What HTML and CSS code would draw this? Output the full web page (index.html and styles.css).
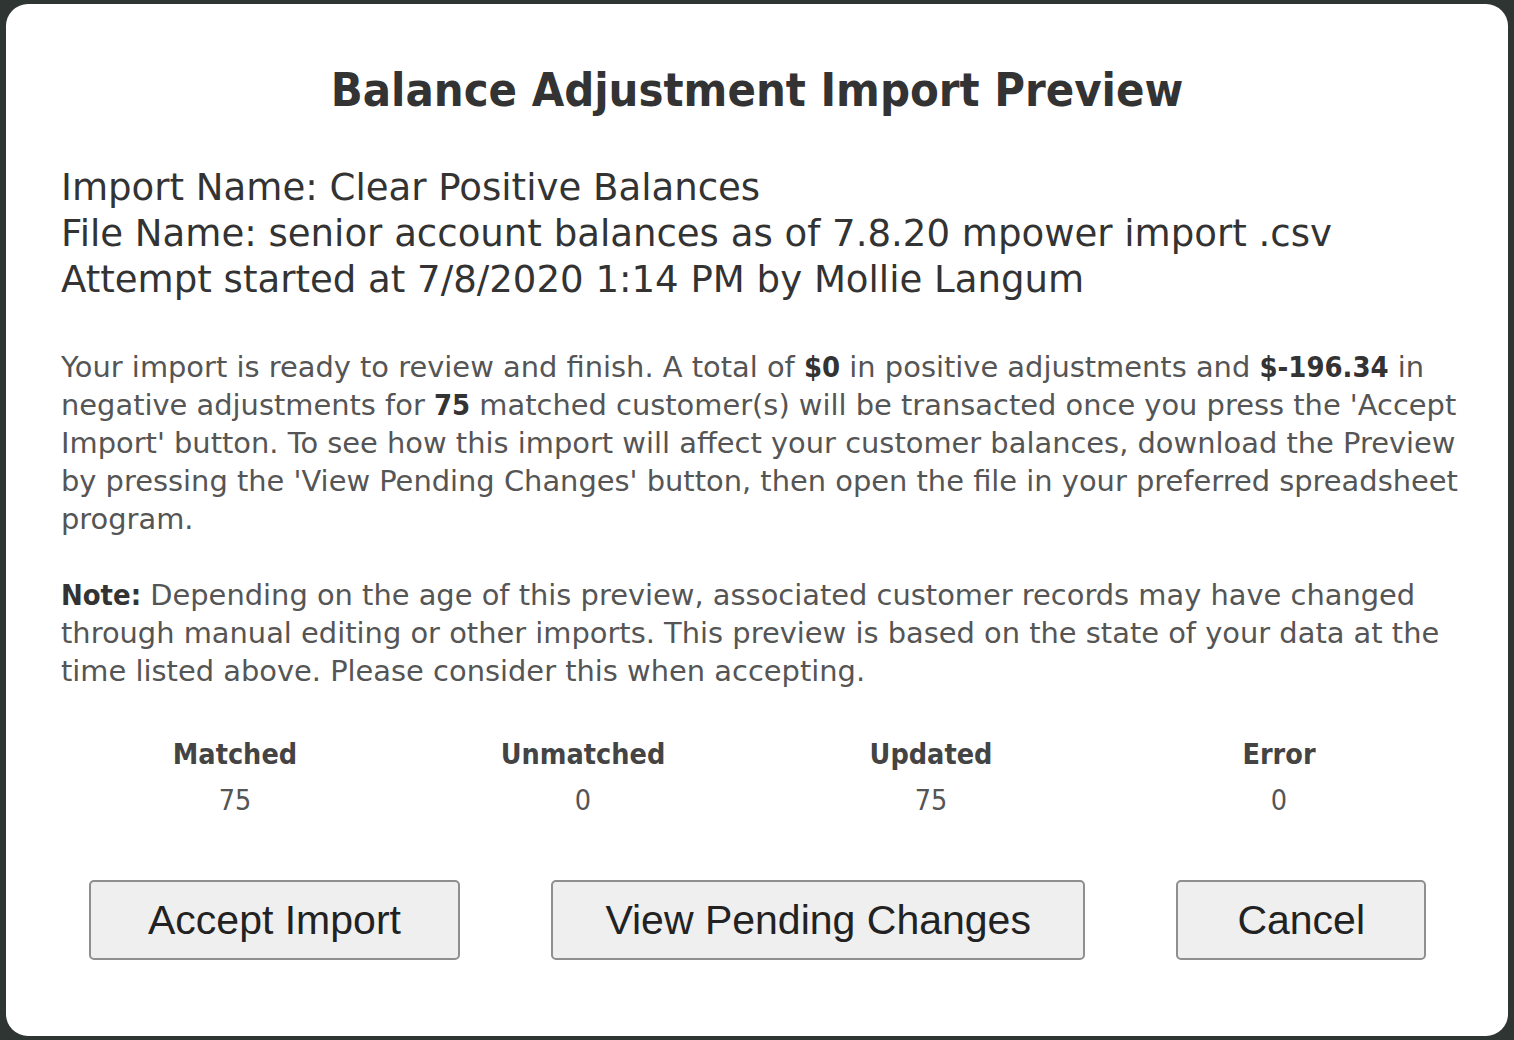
FILE: index.html
```html
<!DOCTYPE html>
<html lang="en">
<head>
<meta charset="utf-8">
<title>Balance Adjustment Import Preview</title>
<link rel="stylesheet" href="styles.css">
</head>
<body>
<div class="modal">
  <h1 class="title">Balance Adjustment Import Preview</h1>
  <div class="info">
    <div>Import Name: Clear Positive Balances</div>
    <div>File Name: senior account balances as of 7.8.20 mpower import .csv</div>
    <div>Attempt started at 7/8/2020 1:14 PM by Mollie Langum</div>
  </div>
  <p class="text">Your import is ready to review and finish. A total of <b>$0</b> in positive adjustments and <b>$-196.34</b> in negative adjustments for <b>75</b> matched customer(s) will be transacted once you press the 'Accept Import' button. To see how this import will affect your customer balances, download the Preview by pressing the 'View Pending Changes' button, then open the file in your preferred spreadsheet program.</p>
  <p class="text note"><b>Note:</b> Depending on the age of this preview, associated customer records may have changed through manual editing or other imports. This preview is based on the state of your data at the time listed above. Please consider this when accepting.</p>
  <div class="stats">
    <div class="stat"><div class="label">Matched</div><div class="value">75</div></div>
    <div class="stat"><div class="label">Unmatched</div><div class="value">0</div></div>
    <div class="stat"><div class="label">Updated</div><div class="value">75</div></div>
    <div class="stat"><div class="label">Error</div><div class="value">0</div></div>
  </div>
  <div class="actions">
    <button class="btn btn-accept">Accept Import</button>
    <button class="btn btn-view">View Pending Changes</button>
    <button class="btn btn-cancel">Cancel</button>
  </div>
</div>
</body>
</html>
```

FILE: styles.css
```css
html, body {
  margin: 0;
  padding: 0;
  height: 100%;
}
body {
  background: #2f3532;
  font-family: "DejaVu Sans", sans-serif;
  padding: 4px 6px;
  box-sizing: border-box;
}
.modal {
  background: #ffffff;
  border-radius: 22px;
  height: 1032px;
  box-sizing: border-box;
  padding: 56px 50px 0 55px;
  color: #333;
}
.title {
  margin: 0;
  text-align: center;
  font-family: "DejaVu Sans Condensed", "DejaVu Sans", sans-serif;
  font-stretch: condensed;
  font-size: 46.7px;
  line-height: 60px;
  font-weight: bold;
  color: #333;
  padding-right: 5px;
}
.info {
  margin-top: 45px;
  font-size: 37.1px;
  line-height: 46px;
  color: #333;
}
.text {
  margin: 45px -10px 0 0;
  font-size: 28.9px;
  line-height: 38px;
  color: #555;
}
.text b {
  color: #333;
  font-family: "DejaVu Sans Condensed", "DejaVu Sans", sans-serif;
  font-stretch: condensed;
}
.note {
  margin-top: 38px;
}
.stats {
  display: grid;
  grid-template-columns: repeat(4, 1fr);
  margin: 42px 5px 0 0;
  text-align: center;
  font-family: "DejaVu Sans Condensed", "DejaVu Sans", sans-serif;
  font-stretch: condensed;
  font-size: 28.5px;
  line-height: 46px;
  color: #444;
}
.label {
  font-weight: bold;
}
.value {
  color: #555;
}
.actions {
  display: flex;
  justify-content: space-between;
  padding: 0 32px 0 28px;
  margin-top: 56px;
}
.btn {
  height: 80px;
  padding: 0 57px;
  font-family: "Liberation Sans", Arial, sans-serif;
  font-size: 41px;
  color: #222;
  background: #efefef;
  border: 2px solid #8f8f8f;
  border-radius: 5px;
}
.btn-view {
  padding: 0 52px;
}
.btn-cancel {
  padding: 0 59px;
}
```
